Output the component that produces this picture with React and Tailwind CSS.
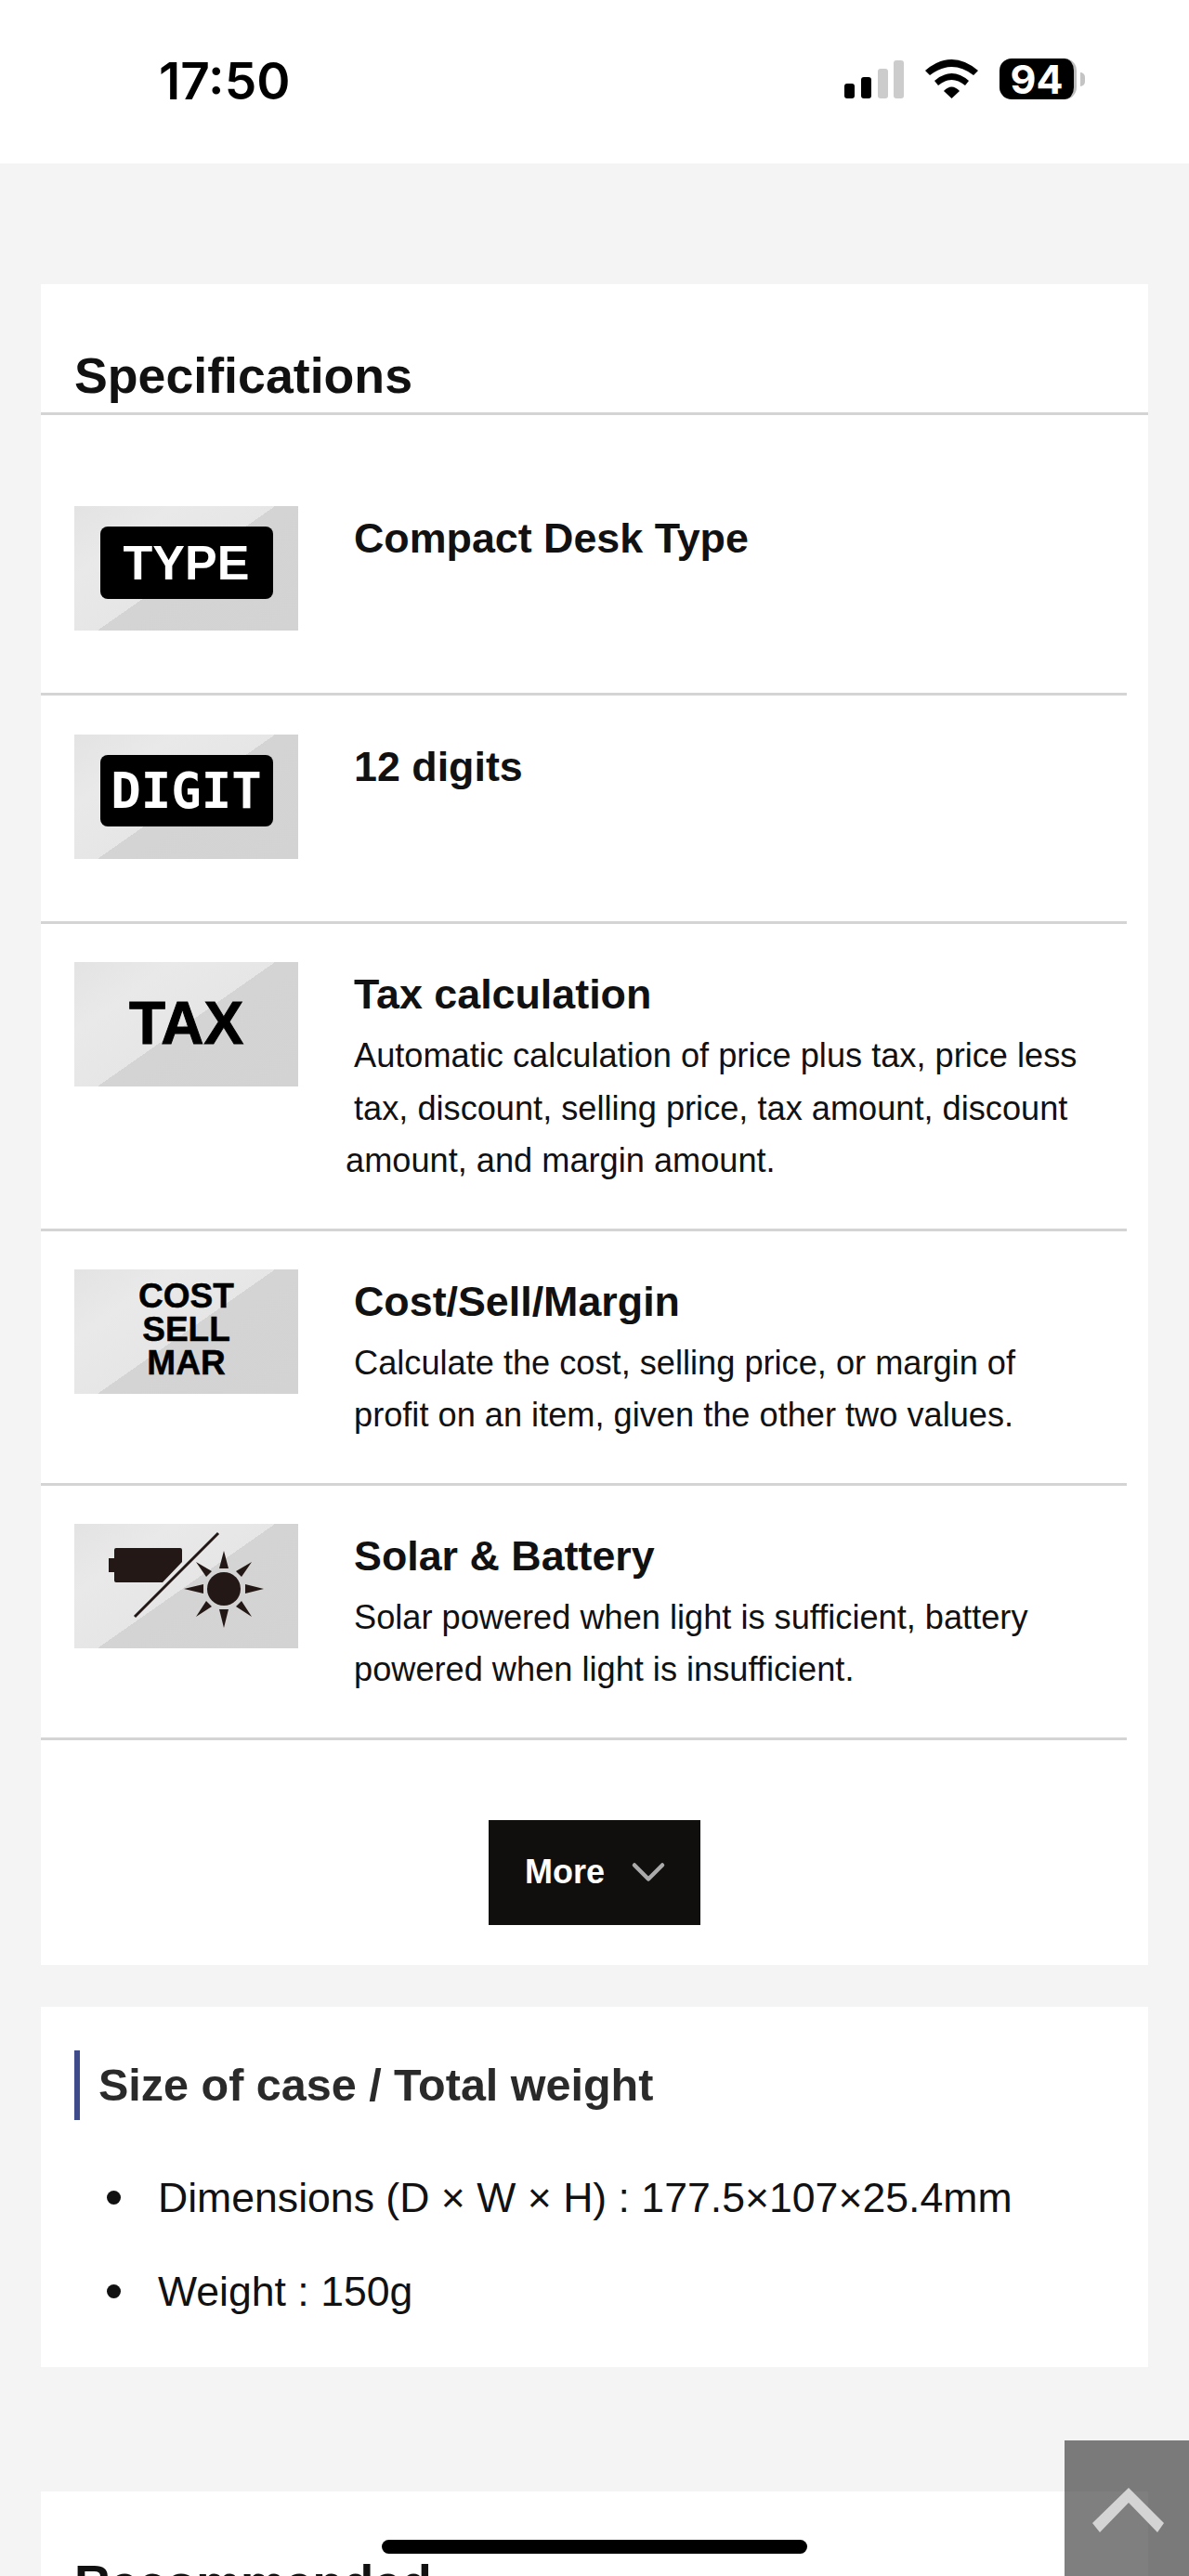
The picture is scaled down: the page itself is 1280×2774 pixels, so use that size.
import React from 'react';
import { ChevronDown } from 'lucide-react';

const iconBg = 'w-[241px] h-[134px] shrink-0 flex items-center justify-center bg-[linear-gradient(145deg,#e3e3e3_0%,#e9e9e9_25%,#e6e6e6_50%,#d4d4d4_50%,#d3d3d3_100%)]';

const StatusIcons = () => (
    <div className="flex items-center">
        <svg width="64" height="41" viewBox="0 0 64 41" className="mr-[23px]">
            <rect x="0" y="25" width="11" height="16" rx="3" fill="#000" />
            <rect x="18" y="18" width="11" height="23" rx="3" fill="#000" />
            <rect x="36" y="9" width="11" height="32" rx="3" fill="#cccccc" />
            <rect x="53" y="0" width="11" height="41" rx="3" fill="#cccccc" />
        </svg>
        <svg width="57" height="42" viewBox="0 0 57 42" className="mr-[23px]">
            <path d="M0 12 Q28.5 -12 57 12 L52 17 Q28.5 -1 5 17 Z" fill="#000" />
            <path d="M10 23 Q28.5 7 47 23 L43 28 Q28.5 16 14 28 Z" fill="#000" />
            <path d="M20 34 Q28.5 25 37 34 L28.5 42 Z" fill="#000" />
        </svg>
        <div className="w-[83px] h-[44px] rounded-[13px] bg-[#000] flex items-center justify-center border-r-[3px] border-[#bdbdbd]">
            <span className="text-white text-[43px] font-bold leading-none font-['Inter']">94</span>
        </div>
        <div className="w-[5px] h-[15px] ml-[4px] rounded-r-full bg-[#c4c4c4]" />
    </div>
);

const SolarIcon = () => (
    <svg width="241" height="134" viewBox="0 0 241 134">
        <path d="M43 28 Q43 26 45 26 L114 26 Q116 26 116 28 L116 41 L95 63 L45 63 Q43 63 43 61 L43 52 L37 52 L37 37 L43 37 Z" fill="#231815" />
        <line x1="65" y1="100" x2="155" y2="10" stroke="#231815" strokeWidth="3" />
        <circle cx="161" cy="70" r="18" fill="#231815" />
        <path d="M161 29 L166 48 L156 48 Z M161 112 L166 92 L156 92 Z M118 70 L139 65 L139 75 Z M204 70 L184 65 L184 75 Z M131 41 L148 51 L142 57 Z M191 41 L174 51 L180 57 Z M131 100 L148 89 L142 83 Z M191 100 L174 89 L180 83 Z" fill="#231815" />
    </svg>
);

const rows = [
    {
        title: 'Compact Desk Type',
        top: 'pt-[98px]',
        icon: (
            <div className="w-[186px] h-[78px] mb-[13px] rounded-[8px] bg-black flex items-center justify-center">
                <span className="text-white text-[52px] font-bold leading-none">TYPE</span>
            </div>
        ),
    },
    {
        title: '12 digits',
        top: 'pt-[42px]',
        icon: (
            <div className="w-[186px] h-[77px] mb-[13px] rounded-[8px] bg-black flex items-center justify-center">
                <span className="text-white text-[54px] font-bold leading-none font-['DejaVu_Sans_Mono']">DIGIT</span>
            </div>
        ),
    },
    {
        title: 'Tax calculation',
        top: 'pt-[41px]',
        desc: [
            <span key="1" className="block whitespace-nowrap">Automatic calculation of price plus tax, price less</span>,
            <span key="2" className="block whitespace-nowrap">tax, discount, selling price, tax amount, discount</span>,
            <span key="3" className="block whitespace-nowrap -ml-[9px]">amount, and margin amount.</span>,
        ],
        icon: <span className="text-black text-[64px] font-bold leading-none [-webkit-text-stroke:1px_black] -mt-[3px]">TAX</span>,
    },
    {
        title: 'Cost/Sell/Margin',
        top: 'pt-[41px]',
        desc: [
            <span key="1" className="block whitespace-nowrap">Calculate the cost, selling price, or margin of</span>,
            <span key="2" className="block whitespace-nowrap">profit on an item, given the other two values.</span>,
        ],
        icon: (
            <div className="text-black text-[37px] font-bold leading-[36px] text-center [-webkit-text-stroke:0.5px_black] -mt-[3px]">
                COST<br />SELL<br />MAR
            </div>
        ),
    },
    {
        title: 'Solar & Battery',
        top: 'pt-[41px]',
        desc: [
            <span key="1" className="block whitespace-nowrap">Solar powered when light is sufficient, battery</span>,
            <span key="2" className="block whitespace-nowrap">powered when light is insufficient.</span>,
        ],
        icon: <SolarIcon />,
    },
];

const SpecRow = ({ row }) => (
    <div className={`flex w-[1169px] pl-[36px] border-b-[3px] border-[#d4d4d4] ${row.top}`}>
        <div className="pb-[67px]">
            <div className={iconBg}>{row.icon}</div>
        </div>
        <div className="ml-[60px] pb-[44px]">
            <h3 className="text-[44.8px] font-bold text-[#111] leading-[69px]">{row.title}</h3>
            {row.desc && <p className="text-[36.2px] text-[#111] leading-[56.5px] mt-[4px]">{row.desc}</p>}
        </div>
    </div>
);

const App = () => {
    return (
        <div className="relative w-[1280px] h-[2774px] overflow-hidden bg-[#f4f4f4] font-['Liberation_Sans',Arial,sans-serif]">
            {/* Status bar */}
            <div className="h-[176px] bg-white flex items-start justify-between pl-[171px] pr-[112px]">
                <span className="mt-[55px] text-[55px] font-semibold leading-[64px] text-black font-['Inter']">17:50</span>
                <div className="mt-[63px]">
                    <StatusIcons />
                </div>
            </div>

            <div className="pt-[130px] px-[44px]">
                {/* Specifications */}
                <section className="bg-white pb-[43px]">
                    <h2 className="h-[141px] pl-[36px] pt-[62px] text-[53.7px] leading-[72px] font-bold text-[#111] border-b-[3px] border-[#d4d4d4]">Specifications</h2>
                    {rows.map((row) => (
                        <SpecRow key={row.title} row={row} />
                    ))}
                    <div className="flex justify-center mt-[86px]">
                        <button className="w-[228px] h-[113px] pl-[13px] bg-[#110f0e] flex items-center justify-center text-white text-[36px] font-bold">
                            More
                            <ChevronDown className="ml-[17px] w-[60px] h-[60px] text-[#aaaaaa]" strokeWidth={1.8} />
                        </button>
                    </div>
                </section>

                {/* Size of case */}
                <section className="mt-[45px] bg-white pt-[47px] pl-[36px] h-[388px]">
                    <h3 className="h-[75px] flex items-center border-l-[6px] border-[#3f4a8a] pl-[20px] text-[48.5px] font-bold text-[#2a2a2a]">Size of case / Total weight</h3>
                    <ul className="mt-[32px] ml-[72px] list-disc text-[44.6px] text-[#111] marker:text-[50px]">
                        <li className="h-[101px] leading-[101px] pl-[18px]">Dimensions (D × W × H) : 177.5×107×25.4mm</li>
                        <li className="h-[101px] leading-[101px] pl-[18px]">Weight : 150g</li>
                    </ul>
                </section>

                {/* Recommended */}
                <section className="mt-[134px] bg-white">
                    <h2 className="pl-[36px] pt-[62px] text-[53.7px] leading-[72px] font-bold text-[#111]">Recommended</h2>
                </section>
            </div>

            {/* Back to top */}
            <div className="absolute right-0 top-[2628px] w-[134px] h-[146px] bg-black/50">
                <svg width="134" height="146" viewBox="0 0 134 146">
                    <polygon points="69,51 107,89 100,99 69,67 38,99 30,89" fill="#d4d4d4" />
                </svg>
            </div>

            {/* Home indicator */}
            <div className="absolute left-[411px] top-[2735px] w-[458px] h-[15px] rounded-full bg-black" />
        </div>
    );
};

export default App;
